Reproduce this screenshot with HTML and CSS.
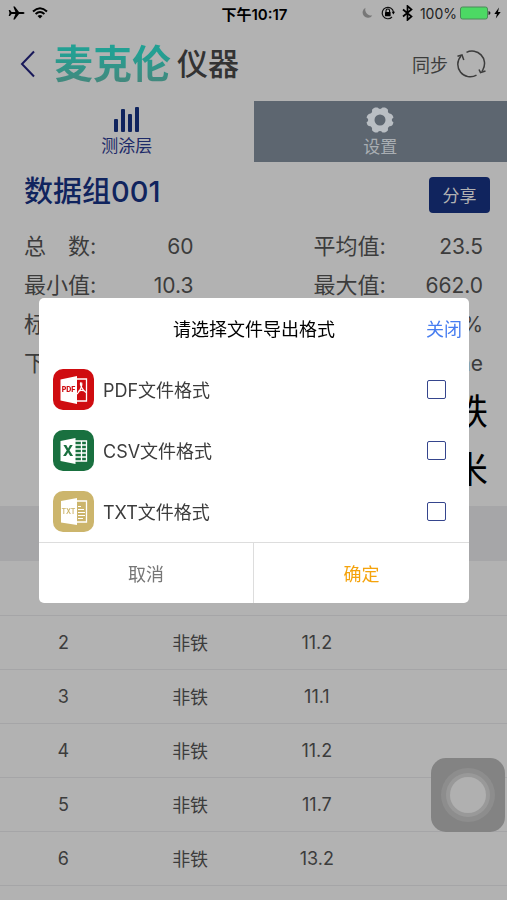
FILE: index.html
```html
<!DOCTYPE html>
<html lang="zh-CN">
<head>
<meta charset="utf-8">
<meta name="viewport" content="width=device-width, initial-scale=1">
<title>麦克伦仪器</title>
<link rel="stylesheet" href="styles.css">
</head>
<body>
<div class="app">
  <div class="status">
    <div class="status-side">
      <svg width="17" height="16" viewBox="0 0 17 16" aria-hidden="true"><path d="M16.500 8q0 .9-1.500.9h-4l-4.200 5.600H5.300L7.400 8.900H3.600L2 11H.7L1.500 8 .7 5H2l1.600 2.100h3.800L5.300 1.500h1.500L11 7.100h4q1.500 0 1.500.9z"/></svg>
      <svg width="16" height="12" viewBox="0 0 16 12" aria-hidden="true"><g fill="none" stroke="#000" stroke-width="2"><path d="M1 4.400Q8-2 15 4.400"/><path d="M3.600 7Q8 3 12.400 7"/></g><path d="M8 11.500 5.500 9Q8 7 10.500 9z"/></svg>
    </div>
    <time class="clock">下午10:17</time>
    <div class="status-side status-right">
      <svg class="moon" width="12" height="12" viewBox="0 0 12 12" aria-hidden="true"><path fill="#777" d="M4.500.8A5.300 5.300 0 1 0 11.300 8.500 6 6 0 0 1 4.500.8z"/></svg>
      <svg class="lock" width="14" height="14" viewBox="0 0 14 14" aria-hidden="true"><path d="M12.500 6A5.700 5.700 0 1 0 11 11" fill="none" stroke="#111" stroke-width="1.200"/><path d="M10.700 5.700h3.300L12.300 8.500z"/><rect x="4" y="6" width="5.600" height="4.200" rx=".5"/><path d="M5 6V4.800a1.800 1.800 0 0 1 3.600 0V6" fill="none" stroke="#000" stroke-width="1.100"/></svg>
      <svg width="11" height="16" viewBox="0 0 11 16" aria-hidden="true"><path d="M1 4.500 9.500 11.500 5.500 15V1L9.500 4.500 1 11.500" fill="none" stroke="#000" stroke-width="1.700"/></svg>
      <span class="percent">100%</span>
      <svg width="31" height="14" viewBox="0 0 31 14" aria-hidden="true"><rect x=".5" y="1" width="27" height="12" rx="2" fill="#4cd964" stroke="#4b8a58"/><path fill="#222" d="M28.500 5q2 .5 2 2t-2 2z"/></svg>
      <svg width="7" height="12" viewBox="0 0 7 12" aria-hidden="true"><path d="M5 .5.300 7h2.600L1.800 11.500 6.700 5H4z"/></svg>
    </div>
  </div>

  <header class="header">
    <button class="back" type="button" aria-label="返回"><svg width="16" height="28" viewBox="0 0 16 28"><path d="M14 1.500 2 14l12 12.500" fill="none" stroke="#19195a" stroke-width="2"/></svg></button>
    <h1 class="brand"><span class="brand-main">麦克伦</span><span class="brand-sub">仪器</span></h1>
    <button class="sync" type="button">同步
      <svg width="30" height="28" viewBox="0 0 30 28" aria-hidden="true"><g fill="none" stroke="#3c3c3c" stroke-width="1.500"><path d="M10.500 2.300A12.500 12.500 0 0 1 27 19.500l-1 2"/><path d="M5 6A12.500 12.500 0 0 0 20.500 25.200"/><path d="M1.500 6.300 6 5l1.800 5M23 19.500l1.500 3 5-1.500"/></g></svg>
    </button>
  </header>

  <nav class="tabs">
    <a class="tab" href="#coating"><svg width="26" height="25" viewBox="0 0 26 25" aria-hidden="true"><g fill="#10245e"><rect y="12" width="4" height="13" rx="1"/><rect x="7" y="2" width="4" height="23" rx="1"/><rect x="14" y="7" width="4" height="18" rx="1"/><rect x="21" width="4" height="25" rx="1"/></g></svg>测涂层</a>
    <a class="tab tab-settings" href="#settings"><svg width="28" height="26" viewBox="0 0 28 26" aria-hidden="true"><path fill="#b9bec3" fill-rule="evenodd" d="M9 .5h2.500Q14 3.400 16.500.5H19q2 .7 3 2.300-.8 4 3.200 4.200 1.800 1 2.300 3.500-3.500 2.500 0 5-.5 2.500-2.300 3.500-4 .2-3.200 4.200-1 1.600-3 2.300h-2.500q-2.500-2.900-5 0H9q-2-.7-3-2.300.8-4-3.200-4.200-1.800-1-2.300-3.500 3.500-2.500 0-5Q1 8 2.800 7 6.800 6.800 6 2.800 7 1.200 9 .5zM14 7.500a5.500 5.500 0 1 0 0 11 5.500 5.500 0 0 0 0-11z"/></svg>设置</a>
  </nav>

  <main>
    <div class="group">
      <h2>数据组001</h2>
      <button class="share" type="button">分享</button>
    </div>
    <dl class="stats">
      <div><dt>总　数:</dt><dd>60</dd></div>
      <div><dt>平均值:</dt><dd>23.5</dd></div>
      <div><dt>最小值:</dt><dd>10.3</dd></div>
      <div><dt>最大值:</dt><dd>662.0</dd></div>
      <div><dt>标</dt><dd></dd></div>
      <div><dt></dt><dd>%</dd></div>
      <div><dt>下</dt><dd></dd></div>
      <div><dt></dt><dd>ne</dd></div>
    </dl>
    <div class="units"><span>铁</span><span>米</span></div>
    <table class="data">
      <thead><tr><th></th><th></th><th></th><th></th></tr></thead>
      <tbody>
        <tr><td></td><td></td><td></td><td></td></tr>
        <tr><td>2</td><td>非铁</td><td>11.2</td><td></td></tr>
        <tr><td>3</td><td>非铁</td><td>11.1</td><td></td></tr>
        <tr><td>4</td><td>非铁</td><td>11.2</td><td></td></tr>
        <tr><td>5</td><td>非铁</td><td>11.7</td><td></td></tr>
        <tr><td>6</td><td>非铁</td><td>13.2</td><td></td></tr>
      </tbody>
    </table>
  </main>
</div>

<button class="assist" type="button" aria-label="辅助触控"><span></span></button>

<div class="overlay">
  <form class="dialog" role="dialog" aria-labelledby="dialog-title">
    <div class="dialog-head">
      <h3 id="dialog-title">请选择文件导出格式</h3>
      <button class="close" type="button">关闭</button>
    </div>
    <div class="options">
      <label class="option" for="pdf">
        <svg width="41" height="41" viewBox="0 0 41 41" aria-hidden="true"><rect width="41" height="41" rx="10" fill="#cf0c10"/><path d="M22 10h11.500v22H22" fill="none" stroke="#fff" stroke-width="1.300"/><path d="M28 13.500c-2 1 1.500 7.500 5 10M28.500 13.500c1.500 3-2.500 10-4.500 11.500M25 22.500q3-2 7-.5" fill="none" stroke="#fff" stroke-width="1.200"/><path fill="#fff" d="M7.500 10.500 24 7v28L7.500 31.500z"/><text x="15.500" y="23" class="file-mark" fill="#cf0c10">PDF</text></svg>
        <span>PDF文件格式</span><input type="checkbox" id="pdf">
      </label>
      <label class="option" for="csv">
        <svg width="41" height="41" viewBox="0 0 41 41" aria-hidden="true"><rect width="41" height="41" rx="10" fill="#19703f"/><path d="M22 11h11.500v20H22M22 15h11.500M22 19h11.500M22 23h11.500M22 27h11.500M28.500 11v20" fill="none" stroke="#fff" stroke-width="1.300"/><path fill="#fff" d="M7.500 11 22.500 8v26L7.500 31z"/><text x="15" y="26" class="file-mark file-mark-large" fill="#19703f">X</text></svg>
        <span>CSV文件格式</span><input type="checkbox" id="csv">
      </label>
      <label class="option" for="txt">
        <svg width="41" height="41" viewBox="0 0 41 41" aria-hidden="true"><rect width="41" height="41" rx="10" fill="#ccb56c"/><path d="M22 10h11.500v21H22" fill="none" stroke="#fff" stroke-width="1.300"/><path d="M25 15.500h3M25 18.500h6M25 21.500h7M25 24.500h7M25 27.500h5" stroke="#fff"/><path fill="#fff" d="M8 10 24 7v27L8 31.500z"/><text x="15.500" y="23" class="file-mark file-mark-light" fill="#ccb56c">TXT</text></svg>
        <span>TXT文件格式</span><input type="checkbox" id="txt">
      </label>
    </div>
    <div class="actions">
      <button class="cancel" type="button">取消</button>
      <button class="confirm" type="submit">确定</button>
    </div>
  </form>
</div>
</body>
</html>
```
FILE: styles.css
```css
* { box-sizing: border-box; }

body {
  margin: 0;
  background: #b2b2b2;
  color: #3c3c3c;
  font-family: Inter, "Noto Sans CJK SC", sans-serif;
  overflow: hidden;
}

button {
  padding: 0;
  border: 0;
  background: none;
  font: inherit;
  color: inherit;
}

svg { display: block; flex: none; }
h1, h2, h3, dl, dd { margin: 0; }

.app { min-height: 100vh; }

.status {
  display: flex;
  align-items: center;
  height: 26px;
  padding: 0 6px 0 8px;
  color: #000;
  font-size: 14px;
}
.status-side { display: flex; flex: 1; align-items: center; gap: 7px; }
.status-right { justify-content: flex-end; gap: 3px; }
.moon { margin-right: 5px; }
.lock { margin-right: 4px; }
.clock { font-size: 15px; font-weight: 600; }
.percent { margin-left: 4px; color: #222; }

.header {
  display: flex;
  align-items: center;
  height: 75px;
  padding: 0 21px 0 20px;
}
.brand { display: flex; align-items: center; gap: 6px; flex: 1; margin-left: 18px; }
.brand-main {
  background: linear-gradient(#22a093 30%, #42897e 80%);
  background-clip: text;
  color: transparent;
  font-size: 39px;
  font-weight: 700;
  line-height: 56px;
}
.brand-sub { color: #333; font-size: 31px; font-weight: 500; line-height: 44px; }
.sync { display: flex; align-items: center; gap: 8px; font-size: 18px; }

.tabs { display: grid; grid-template-columns: 1fr 1fr; }
.tab {
  display: flex;
  flex-direction: column;
  align-items: center;
  gap: 2px;
  height: 61px;
  padding-top: 6px;
  color: #1d2a68;
  font-size: 17px;
  line-height: 24px;
  text-decoration: none;
}
.tab-settings { background: #5d6670; color: #a9aeb3; }

.group {
  display: flex;
  align-items: center;
  justify-content: space-between;
  height: 65px;
  padding: 0 17px 0 24px;
}
.group h2 {
  padding-bottom: 6px;
  color: #10245e;
  font-size: 29px;
  font-weight: 500;
  line-height: 36px;
}
.share {
  width: 61px;
  height: 36px;
  border-radius: 4px;
  background: #10245e;
  color: #b2b2b2;
  font-size: 17px;
}

.stats {
  display: grid;
  grid-template-columns: 1fr 1fr;
  column-gap: 120px;
  padding: 0 24px;
  font-size: 21px;
  line-height: 39px;
}
.stats div { display: flex; justify-content: space-between; height: 39px; }
.stats dt { font-size: 22px; }

.units {
  display: flex;
  flex-direction: column;
  align-items: flex-end;
  padding: 0 19px 7px;
  color: #000;
  font-size: 36px;
  line-height: 58px;
}

.data {
  width: 100%;
  table-layout: fixed;
  border-collapse: collapse;
  font-size: 18px;
  text-align: center;
}
.data th { height: 55px; background: #a6a6a8; }
.data td { height: 54px; padding: 0; border-bottom: 1px solid #a5a5a7; }

.assist {
  position: fixed;
  right: 2px;
  bottom: 68px;
  display: grid;
  place-items: center;
  width: 74px;
  height: 74px;
  border-radius: 15px;
  background: #838383;
}
.assist span {
  width: 36px;
  height: 36px;
  border-radius: 50%;
  background: #b0b0b0;
  box-shadow: 0 0 0 4px #999, 0 0 0 9px #8d8d8d;
}

.overlay {
  position: fixed;
  inset: 0;
  display: flex;
  align-items: center;
  justify-content: center;
  padding: 0 38px 0 39px;
}
.dialog {
  width: 100%;
  overflow: hidden;
  border-radius: 5px;
  background: #fff;
}
.dialog-head {
  display: grid;
  grid-template-columns: 1fr auto 1fr;
  align-items: center;
  height: 61px;
  padding: 0 7px;
  font-size: 18px;
}
.dialog-head h3 { grid-column: 2; color: #000; font-size: inherit; font-weight: 400; }
.close { justify-self: end; color: #477df0; }

.option {
  display: flex;
  align-items: center;
  gap: 9px;
  height: 61px;
  padding: 0 23px 0 14px;
  font-size: 18px;
}
.option span { flex: 1; }
.option input {
  width: 19px;
  height: 19px;
  margin: 0;
  appearance: none;
  border: 1px solid #35458d;
  border-radius: 2px;
}
.file-mark { font: 800 7px Inter, sans-serif; text-anchor: middle; }
.file-mark-large { font-size: 14px; }
.file-mark-light { font-weight: 600; }

.actions {
  display: grid;
  grid-template-columns: 1fr 1fr;
  height: 61px;
  border-top: 1px solid #ddd;
  font-size: 18px;
}
.cancel { border-right: 1px solid #ddd; color: #777; }
.confirm { color: #f5a30c; }
```
